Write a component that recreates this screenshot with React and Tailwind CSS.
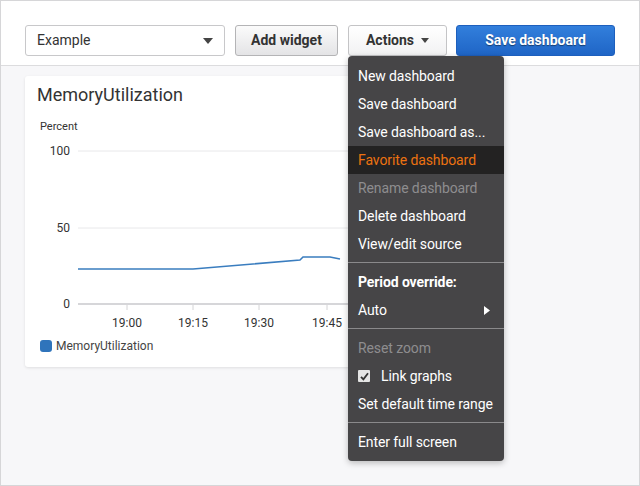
import React from "react";

const font = { fontFamily: "Roboto, 'Liberation Sans', sans-serif" };

function MenuItem({ children, tone = "normal", bold = false }) {
  const color =
    tone === "active"
      ? "bg-[#232222] text-[#ec7211]"
      : tone === "disabled"
      ? "text-[#8e8d8f]"
      : "text-white";
  return (
    <div
      className={`flex h-[28px] items-center whitespace-nowrap px-[10px] text-[14px] tracking-[-0.1px] ${color} ${
        bold ? "font-bold" : ""
      }`}
    >
      {children}
    </div>
  );
}

function Divider() {
  return <div className="mt-[4px] mb-[5px] h-px bg-[#8a898b]" />;
}

function ActionsMenu() {
  return (
    <div className="absolute left-[347px] top-[55px] z-10 w-[156px] rounded-[4px] bg-[#464547] pt-[6px] pb-[5px] shadow-[0_2px_6px_rgba(0,0,0,0.25)]">
      <MenuItem>New dashboard</MenuItem>
      <MenuItem>Save dashboard</MenuItem>
      <MenuItem>Save dashboard as...</MenuItem>
      <MenuItem tone="active">Favorite dashboard</MenuItem>
      <MenuItem tone="disabled">Rename dashboard</MenuItem>
      <MenuItem>Delete dashboard</MenuItem>
      <MenuItem>View/edit source</MenuItem>
      <Divider />
      <MenuItem bold>Period override:</MenuItem>
      <MenuItem>
        <span className="flex-1">Auto</span>
        <svg width="6" height="9" viewBox="0 0 6 9" className="mr-[4px]">
          <path d="M0 0 L6 4.5 L0 9 Z" fill="#fff" />
        </svg>
      </MenuItem>
      <Divider />
      <MenuItem tone="disabled">Reset zoom</MenuItem>
      <MenuItem>
        <span className="mr-[11px] flex h-[12px] w-[12px] items-center justify-center rounded-[1px] bg-[#e4e4e4]">
          <svg width="9" height="9" viewBox="0 0 9 9">
            <path d="M1 4.8 L3.4 7.4 L8 1.2" stroke="#333" strokeWidth="1.8" fill="none" />
          </svg>
        </span>
        Link graphs
      </MenuItem>
      <MenuItem>Set default time range</MenuItem>
      <Divider />
      <MenuItem>Enter full screen</MenuItem>
    </div>
  );
}

function Chart() {
  const gridY = [
    { v: "100", y: 15 },
    { v: "50", y: 92 },
  ];
  const ticks = [
    { t: "19:00", x: 102 },
    { t: "19:15", x: 168 },
    { t: "19:30", x: 234 },
    { t: "19:45", x: 302 },
  ];
  return (
    <svg width="330" height="200" className="block" style={font}>
      {gridY.map((g) => (
        <g key={g.v}>
          <line x1="53" x2="330" y1={g.y} y2={g.y} stroke="#e8e8ea" strokeWidth="1" />
          <text x="45" y={g.y + 4} textAnchor="end" fontSize="12" fill="#333">
            {g.v}
          </text>
        </g>
      ))}
      <line x1="53" x2="330" y1="168" y2="168" stroke="#c9c9cc" strokeWidth="1.5" />
      <text x="45" y="172" textAnchor="end" fontSize="12" fill="#333">
        0
      </text>
      {ticks.map((k) => (
        <g key={k.t}>
          <line x1={k.x} x2={k.x} y1="169" y2="174" stroke="#d4d4d6" strokeWidth="1" />
          <text x={k.x} y="191" textAnchor="middle" fontSize="12" fill="#333">
            {k.t}
          </text>
        </g>
      ))}
      <polyline
        points="53,133 168,133 275,124 278,121 305,121 315,123"
        fill="none"
        stroke="#3a7dbf"
        strokeWidth="1.6"
      />
    </svg>
  );
}

export default function App() {
  return (
    <div
      className="relative flex h-[486px] w-[640px] flex-col overflow-hidden border border-[#d6d6d8] bg-[#f7f7f9]"
      style={font}
    >
      {/* toolbar */}
      <div className="flex h-[65px] shrink-0 items-start gap-[10px] border-b border-[#dcdcde] bg-white pl-[24px] pt-[24px]">
        <div className="flex h-[31px] w-[200px] items-center justify-between rounded-[3px] border border-[#c8c8ca] bg-white pl-[11px] pr-[11px] text-[14px] text-[#333]">
          <span>Example</span>
          <svg width="10" height="6" viewBox="0 0 10 6">
            <path d="M0 0 L10 0 L5 6 Z" fill="#444" />
          </svg>
        </div>
        <button className="h-[31px] w-[103px] rounded-[3px] border border-[#b4b4b6] bg-gradient-to-b from-[#fbfbfb] to-[#e4e4e6] text-[14px] font-bold text-[#333]">
          Add widget
        </button>
        <button className="flex h-[31px] w-[99px] items-center justify-center gap-[7px] rounded-[3px] border border-[#c4c4c6] bg-gradient-to-b from-white to-[#f2f2f3] text-[14px] font-bold text-[#333]">
          Actions
          <svg width="8" height="5" viewBox="0 0 8 5">
            <path d="M0 0 L8 0 L4 5 Z" fill="#444" />
          </svg>
        </button>
        <button className="ml-[-1px] h-[31px] w-[159px] rounded-[3px] border border-[#1d5fbd] bg-gradient-to-b from-[#327fdc] to-[#1f65c6] text-[14px] font-bold text-white [text-shadow:0_1px_1px_rgba(0,0,0,0.45)]">
          Save dashboard
        </button>
      </div>

      {/* body */}
      <div className="flex-1 pl-[24px] pt-[10px]">
        <div className="w-[330px] rounded-[3px] bg-white pb-[14px] pt-[8px] shadow-[0_1px_3px_rgba(0,0,0,0.1)]">
          <div className="pl-[12px] text-[18px] leading-[22px] text-[#333]">MemoryUtilization</div>
          <div className="mt-[14px] pl-[15px] text-[11px] leading-[13px] text-[#333]">Percent</div>
          <div className="mt-[3px]">
            <Chart />
          </div>
          <div className="mt-[3px] flex items-center gap-[4px] pl-[15px] text-[12px] leading-[14px] text-[#444]">
            <span className="h-[12px] w-[12px] rounded-[3px] bg-[#2f74bb]" />
            MemoryUtilization
          </div>
        </div>
      </div>

      <ActionsMenu />
    </div>
  );
}
